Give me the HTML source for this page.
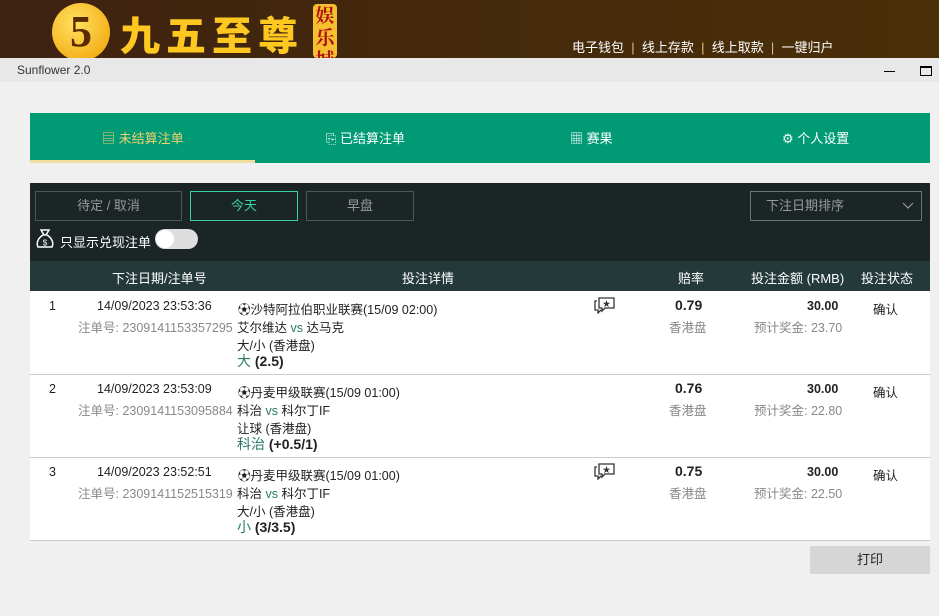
<!DOCTYPE html>
<html><head><meta charset="utf-8"><style>
*{margin:0;padding:0;box-sizing:border-box}
body{width:939px;height:616px;overflow:hidden;background:#f0f0f0;font-family:"Liberation Sans","Noto Sans CJK SC",sans-serif;position:relative;font-size:12.5px;color:#222}
.a{position:absolute;white-space:nowrap}
.g{color:#888}
.t{color:#2a7a6a}
</style></head><body>
<div class="a" style="left:0;top:0;width:939px;height:58px;background:linear-gradient(90deg,#3e2210,#4a3008)"></div>
<div class="a" style="left:52px;top:3px;width:58px;height:58px;border-radius:50%;background:radial-gradient(circle at 40% 35%,#ffe060,#f0a000);color:#5a2a00;font:bold 44px 'Liberation Serif',serif;text-align:center;line-height:58px">5</div>
<div class="a" style="left:120px;top:4px;font:900 40px 'Noto Sans CJK SC',sans-serif;color:#ffc820;letter-spacing:6px">九五至尊</div>
<div class="a" style="left:313px;top:4px;width:24px;height:54px;background:#f5c030;border-radius:4px;color:#b01010;font:bold 19px 'Noto Serif CJK SC',serif;line-height:22px;text-align:center;overflow:hidden;white-space:normal;word-break:break-all">娱乐城</div>
<div class="a" style="left:572px;top:37px;color:#fff;font-size:13px;word-spacing:0">电子钱包&nbsp; <span style="color:#e0c080">|</span>&nbsp; 线上存款&nbsp; <span style="color:#e0c080">|</span>&nbsp; 线上取款&nbsp; <span style="color:#e0c080">|</span>&nbsp; 一键归户</div>
<div class="a" style="left:0;top:58px;width:939px;height:24px;background:#e8e8e8"></div>
<div class="a" style="left:17px;top:63px;font-size:12px;color:#333">Sunflower 2.0</div>
<div class="a" style="left:884px;top:71px;width:11px;height:1px;background:#000"></div>
<div class="a" style="left:920px;top:66px;width:12px;height:10px;border:1px solid #000;border-top-width:2px"></div>

<div class="a" style="left:30px;top:113px;width:900px;height:50px;background:#009a74"></div>
<div class="a" style="left:30px;top:160px;width:225px;height:3px;background:#f3dca0"></div>
<div class="a" style="left:102px;top:128px;color:#f0d070;font-size:13px">▤ 未结算注单</div>
<div class="a" style="left:326px;top:128px;color:#fff;font-size:13px">⎘ 已结算注单</div>
<div class="a" style="left:570px;top:128px;color:#fff;font-size:13px">▦ 赛果</div>
<div class="a" style="left:782px;top:128px;color:#fff;font-size:13px">⚙ 个人设置</div>

<div class="a" style="left:30px;top:183px;width:900px;height:78px;background:#1b2525"></div>
<div class="a" style="left:35px;top:191px;width:147px;height:30px;border:1px solid #4a5656;color:#999;text-align:center;line-height:28px;font-size:13px">待定 / 取消</div>
<div class="a" style="left:190px;top:191px;width:108px;height:30px;border:1px solid #3ad0a0;color:#3ad0a0;text-align:center;line-height:28px;font-size:13px">今天</div>
<div class="a" style="left:306px;top:191px;width:108px;height:30px;border:1px solid #4a5656;color:#999;text-align:center;line-height:28px;font-size:13px">早盘</div>
<div class="a" style="left:750px;top:191px;width:172px;height:30px;border:1px solid #6a7676;color:#999;line-height:28px;padding-left:15px;font-size:13px">下注日期排序
<svg style="position:absolute;right:7px;top:10px" width="12" height="8" viewBox="0 0 12 8"><path d="M1 1l5 5 5-5" fill="none" stroke="#999" stroke-width="1.2"/></svg></div>
<svg class="a" style="left:35px;top:228px" width="20" height="22" viewBox="0 0 20 22"><path d="M6 2h8l-3 5h-2z M8 7C3 10 1 15 3 19h14c2-4 0-9-5-12" fill="none" stroke="#fff" stroke-width="1.5"/><text x="10" y="17.5" font-size="8" fill="#fff" text-anchor="middle" font-family="Liberation Sans">$</text></svg>
<div class="a" style="left:60px;top:232px;color:#fff;font-size:13px">只显示兑现注单</div>
<div class="a" style="left:155px;top:229px;width:43px;height:20px;border-radius:10px;background:#ddd"></div>
<div class="a" style="left:156px;top:230px;width:18px;height:18px;border-radius:50%;background:#fff"></div>

<div class="a" style="left:30px;top:261px;width:900px;height:30px;background:#24393a"></div>
<div class="a" style="left:112px;top:268px;color:#fff;font-size:13px">下注日期/注单号</div>
<div class="a" style="left:402px;top:268px;color:#fff;font-size:13px">投注详情</div>
<div class="a" style="left:678px;top:268px;color:#fff;font-size:13px">赔率</div>
<div class="a" style="left:751px;top:268px;color:#fff;font-size:13px">投注金额 (RMB)</div>
<div class="a" style="left:861px;top:268px;color:#fff;font-size:13px">投注状态</div>

<div class="a" style="left:30px;top:291px;width:900px;height:249px;background:#fff"></div>
<div class="a" style="left:30px;top:374px;width:900px;height:1px;background:#ccc"></div>
<div class="a" style="left:30px;top:457px;width:900px;height:1px;background:#ccc"></div>
<div class="a" style="left:30px;top:540px;width:900px;height:1px;background:#ccc"></div>

<!-- row1 -->
<div class="a" style="left:49px;top:299px">1</div>
<div class="a" style="left:97px;top:299px">14/09/2023 23:53:36</div>
<div class="a g" style="left:78px;top:317px">注单号: 2309141153357295</div>
<div class="a" style="left:238px;top:299px">⚽沙特阿拉伯职业联赛(15/09 02:00)</div>
<div class="a" style="left:237px;top:317px">艾尔维达 <span class="t">vs</span> 达马克</div>
<div class="a" style="left:237px;top:335px">大/小 (香港盘)</div>
<div class="a" style="left:237px;top:351px;font-size:14px"><span class="t">大</span> <b>(2.5)</b></div>
<svg class="a" style="left:594px;top:296px" width="22" height="18" viewBox="0 0 22 18"><path d="M5 2h15v10h-9l-3 3v-3H5z" fill="#fff" stroke="#333" stroke-width="1.3"/><path d="M3 5H1v9h3v3l3-3" fill="none" stroke="#333" stroke-width="1.3"/><text x="12.5" y="10.5" font-size="8" text-anchor="middle" fill="#333">★</text></svg>
<div class="a" style="left:675px;top:297px;font-weight:bold;font-size:14px">0.79</div>
<div class="a g" style="left:669px;top:317px">香港盘</div>
<div class="a" style="left:807px;top:299px;font-weight:bold">30.00</div>
<div class="a g" style="left:754px;top:317px">预计奖金: 23.70</div>
<div class="a" style="left:873px;top:299px">确认</div>
<!-- row2 -->
<div class="a" style="left:49px;top:382px">2</div>
<div class="a" style="left:97px;top:382px">14/09/2023 23:53:09</div>
<div class="a g" style="left:78px;top:400px">注单号: 2309141153095884</div>
<div class="a" style="left:238px;top:382px">⚽丹麦甲级联赛(15/09 01:00)</div>
<div class="a" style="left:237px;top:400px">科治 <span class="t">vs</span> 科尔丁IF</div>
<div class="a" style="left:237px;top:418px">让球 (香港盘)</div>
<div class="a" style="left:237px;top:434px;font-size:14px"><span class="t">科治</span> <b>(+0.5/1)</b></div>
<div class="a" style="left:675px;top:380px;font-weight:bold;font-size:14px">0.76</div>
<div class="a g" style="left:669px;top:400px">香港盘</div>
<div class="a" style="left:807px;top:382px;font-weight:bold">30.00</div>
<div class="a g" style="left:754px;top:400px">预计奖金: 22.80</div>
<div class="a" style="left:873px;top:382px">确认</div>
<!-- row3 -->
<div class="a" style="left:49px;top:465px">3</div>
<div class="a" style="left:97px;top:465px">14/09/2023 23:52:51</div>
<div class="a g" style="left:78px;top:483px">注单号: 2309141152515319</div>
<div class="a" style="left:238px;top:465px">⚽丹麦甲级联赛(15/09 01:00)</div>
<div class="a" style="left:237px;top:483px">科治 <span class="t">vs</span> 科尔丁IF</div>
<div class="a" style="left:237px;top:501px">大/小 (香港盘)</div>
<div class="a" style="left:237px;top:517px;font-size:14px"><span class="t">小</span> <b>(3/3.5)</b></div>
<svg class="a" style="left:594px;top:462px" width="22" height="18" viewBox="0 0 22 18"><path d="M5 2h15v10h-9l-3 3v-3H5z" fill="#fff" stroke="#333" stroke-width="1.3"/><path d="M3 5H1v9h3v3l3-3" fill="none" stroke="#333" stroke-width="1.3"/><text x="12.5" y="10.5" font-size="8" text-anchor="middle" fill="#333">★</text></svg>
<div class="a" style="left:675px;top:463px;font-weight:bold;font-size:14px">0.75</div>
<div class="a g" style="left:669px;top:483px">香港盘</div>
<div class="a" style="left:807px;top:465px;font-weight:bold">30.00</div>
<div class="a g" style="left:754px;top:483px">预计奖金: 22.50</div>
<div class="a" style="left:873px;top:465px">确认</div>

<div class="a" style="left:810px;top:546px;width:120px;height:28px;background:#d6d6d6;text-align:center;line-height:28px;font-size:13px">打印</div>
</body></html>
